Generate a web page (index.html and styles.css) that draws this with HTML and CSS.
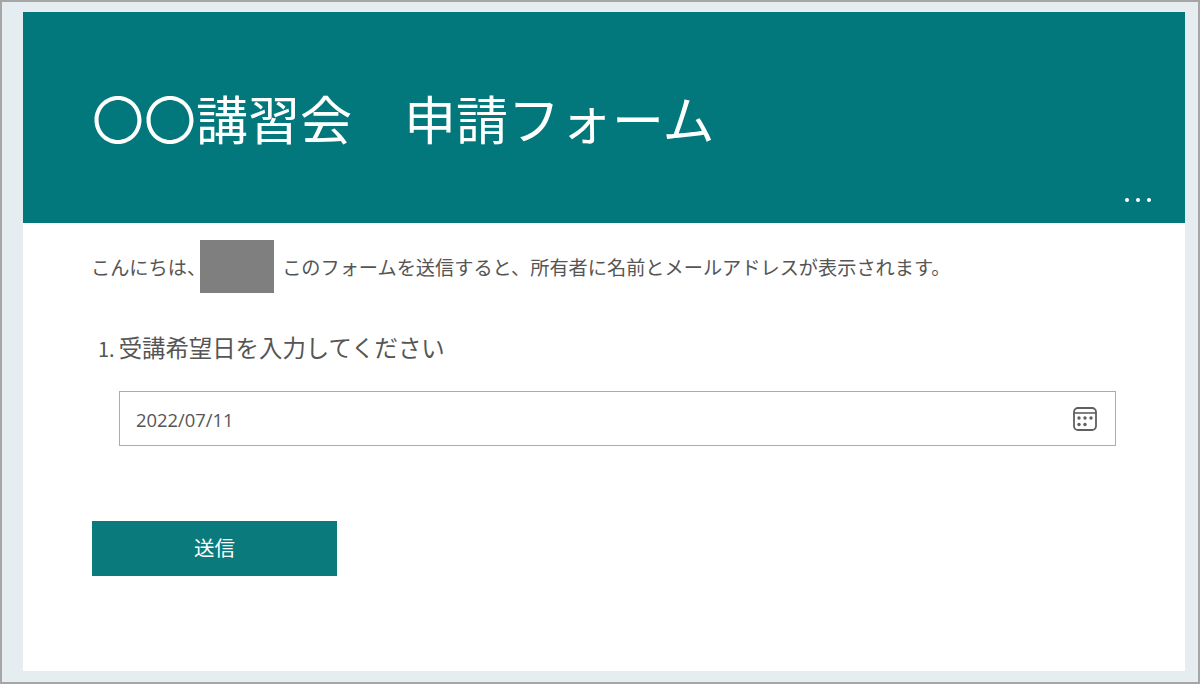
FILE: index.html
```html
<!DOCTYPE html>
<html lang="ja">
<head>
<meta charset="utf-8">
<title>申請フォーム</title>
<link rel="stylesheet" href="styles.css">
</head>
<body>
<main class="card">
  <header class="banner">
    <h1 class="title">〇〇講習会　申請フォーム</h1>
    <div class="more" aria-label="その他"><i></i><i></i><i></i></div>
  </header>
  <section class="content">
    <p class="notice">
      <span>こんにちは、</span>
      <span class="redact"></span>
      <span>このフォームを送信すると、所有者に名前とメールアドレスが表示されます。</span>
    </p>
    <div class="question">
      <span class="num">1.</span><span>受講希望日を入力してください</span>
    </div>
    <div class="date-field">
      <span class="date-value">2022/07/11</span>
      <svg class="cal" width="26" height="26" viewBox="0 0 26 26" fill="none">
        <rect x="2" y="2" width="22" height="22" rx="4" stroke="#5f5f5f" stroke-width="1.8"/>
        <path d="M2 7h22" stroke="#5f5f5f" stroke-width="1.6"/>
        <g fill="#5f5f5f">
          <circle cx="7" cy="12" r="1.7"/><circle cx="13" cy="12" r="1.7"/><circle cx="19" cy="12" r="1.7"/>
          <circle cx="7" cy="18.5" r="1.7"/><circle cx="13" cy="18.5" r="1.7"/>
        </g>
      </svg>
    </div>
    <button class="submit" type="button">送信</button>
  </section>
</main>
</body>
</html>
```
FILE: styles.css
```css
* { box-sizing: border-box; }
html, body { height: 100%; }
body {
  margin: 0;
  height: 684px;
  overflow: hidden;
  padding: 10px 13px 11px 21px;
  background: #e5edf0;
  border: 2px solid #a6a6a6;
  font-family: "Noto Sans CJK JP", "Noto Sans", sans-serif;
  color: #444;
}
.card {
  height: 659px;
  background: #fff;
  display: flex;
  flex-direction: column;
}
.banner {
  height: 211px;
  flex: none;
  background: #03787c;
  padding: 0 34px 0 69px;
  display: flex;
  flex-direction: column;
  justify-content: space-between;
}
.title {
  margin: 70px 0 0;
  font-size: 52px;
  line-height: 72px;
  font-weight: 400;
  color: #fff;
  white-space: nowrap;
}
.more {
  display: flex;
  justify-content: flex-end;
  gap: 7px;
  margin-bottom: 21px;
}
.more i {
  width: 4px;
  height: 4px;
  border-radius: 50%;
  background: #fff;
}
.content {
  padding: 17px 69px 0;
}
.notice {
  margin: 0 0 0 -1px;
  display: flex;
  align-items: center;
  height: 53px;
  font-size: 19.2px;
  font-weight: 400;
  color: #555;
  white-space: nowrap;
}
.redact {
  width: 74px;
  height: 53px;
  background: #7f7f7f;
  margin: 0 8px 0 -6px;
}
.question {
  margin: 37px 0 0 6px;
  font-size: 23.4px;
  font-weight: 400;
  color: #555;
  line-height: 34px;
  white-space: nowrap;
}
.num { margin-right: 4px; font-size: 20px; }
.date-field {
  margin: 25px 0 0 27px;
  width: 997px;
  height: 55px;
  border: 1px solid #ababab;
  display: flex;
  align-items: center;
  justify-content: space-between;
  padding: 0 17px 0 16px;
}
.date-value {
  font-family: "Open Sans", sans-serif;
  font-size: 18.4px;
  color: #555;
  padding-top: 2px;
}
.submit {
  display: block;
  margin-top: 75px;
  width: 245px;
  height: 55px;
  border: 0;
  background: #0a7a7c;
  color: #fff;
  font-family: inherit;
  font-size: 20.5px;
  padding: 0 0 4px;
}
```
